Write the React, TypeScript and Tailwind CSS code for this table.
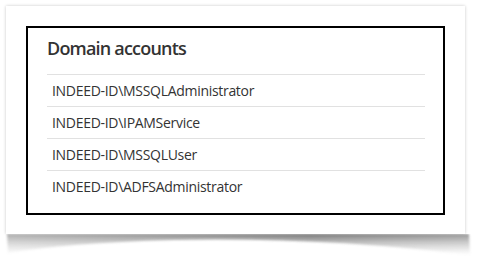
const accounts = [
	"INDEED-ID\\MSSQLAdministrator",
	"INDEED-ID\\IPAMService",
	"INDEED-ID\\MSSQLUser",
	"INDEED-ID\\ADFSAdministrator",
];

export default function App() {
	return (
		<div
			className="w-[479px] h-[264px] bg-white pt-[6px] pl-[6px]"
			style={{ fontFamily: '"Open Sans", "Noto Sans", sans-serif' }}
		>
			<div className="w-[459px] h-[228px] bg-white shadow-[0_0_3px_rgba(0,0,0,0.22)] pt-[20px] pl-[20px]">
				<div className="w-[419px] h-[189px] border-2 border-black pl-[19px] pr-[18px] pt-[8px]">
					<h2 className="text-[18px] leading-[24px] font-semibold tracking-[-0.8px] text-[#333] pb-[14px]">
						Domain accounts
					</h2>
					<ul>
						{accounts.map((a) => (
							<li
								key={a}
								className="h-[32px] border-t border-[#e1e1e1] flex items-center pl-[5px] text-[14px] tracking-[-0.3px] text-[#333]"
							>
								{a}
							</li>
						))}
					</ul>
				</div>
			</div>
			<svg width="470" height="24" viewBox="0 0 470 24" className="block -ml-[2px]">
				<defs>
					<linearGradient id="curl" x1="0" y1="0" x2="0" y2="1">
						<stop offset="0" stopColor="#555" stopOpacity="0.8" />
						<stop offset="1" stopColor="#999" stopOpacity="0" />
					</linearGradient>
					<linearGradient id="fadeX" x1="0" y1="0" x2="1" y2="0">
						<stop offset="0" stopColor="#fff" stopOpacity="0.4" />
						<stop offset="0.65" stopColor="#fff" stopOpacity="0" />
						<stop offset="1" stopColor="#fff" stopOpacity="0.25" />
					</linearGradient>
					<filter id="blur" x="-5%" y="-50%" width="110%" height="200%">
						<feGaussianBlur stdDeviation="1.2" />
					</filter>
				</defs>
				<path d="M3 0 L465 0 L466 21 Q320 3 170 6 Q60 9 4 19 Z" fill="url(#curl)" filter="url(#blur)" />
				<rect x="0" y="0" width="470" height="24" fill="url(#fadeX)" />
			</svg>
		</div>
	);
}
